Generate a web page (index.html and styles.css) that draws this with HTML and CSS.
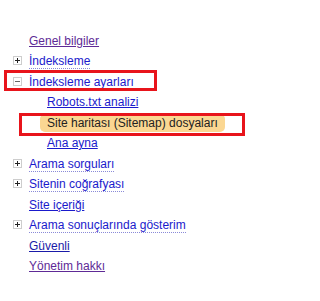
FILE: index.html
```html
<!DOCTYPE html>
<html>
<head>
<meta charset="utf-8">
<link rel="stylesheet" href="styles.css">
</head>
<body>
<ul class="tree">
  <li class="row"><span class="gap"></span><a class="lnk visited solid">Genel bilgiler</a></li>
  <li class="row"><svg class="ico" viewBox="0 0 9 9" width="9" height="9"><rect x="0.5" y="0.5" width="8" height="8" fill="none" stroke="#9a9a9a" stroke-dasharray="1 1"/><path d="M2 4.5h5M4.5 2v5" stroke="#222" stroke-width="1"/></svg><a class="lnk dotted">İndeksleme</a></li>
  <li class="row mark1"><svg class="ico" viewBox="0 0 9 9" width="9" height="9"><rect x="0.5" y="0.5" width="8" height="8" fill="none" stroke="#9a9a9a" stroke-dasharray="1 1"/><path d="M2 4.5h5" stroke="#666" stroke-width="1"/></svg><a class="lnk dotted">İndeksleme ayarları</a></li>
  <li class="row sub"><a class="lnk solid">Robots.txt analizi</a></li>
  <li class="row sub mark2"><span class="pill">Site haritası (Sitemap) dosyaları</span></li>
  <li class="row sub"><a class="lnk solid">Ana ayna</a></li>
  <li class="row"><svg class="ico" viewBox="0 0 9 9" width="9" height="9"><rect x="0.5" y="0.5" width="8" height="8" fill="none" stroke="#9a9a9a" stroke-dasharray="1 1"/><path d="M2 4.5h5M4.5 2v5" stroke="#222" stroke-width="1"/></svg><a class="lnk dotted">Arama sorguları</a></li>
  <li class="row"><svg class="ico" viewBox="0 0 9 9" width="9" height="9"><rect x="0.5" y="0.5" width="8" height="8" fill="none" stroke="#9a9a9a" stroke-dasharray="1 1"/><path d="M2 4.5h5M4.5 2v5" stroke="#222" stroke-width="1"/></svg><a class="lnk dotted">Sitenin coğrafyası</a></li>
  <li class="row"><span class="gap"></span><a class="lnk solid">Site içeriği</a></li>
  <li class="row"><svg class="ico" viewBox="0 0 9 9" width="9" height="9"><rect x="0.5" y="0.5" width="8" height="8" fill="none" stroke="#9a9a9a" stroke-dasharray="1 1"/><path d="M2 4.5h5M4.5 2v5" stroke="#222" stroke-width="1"/></svg><a class="lnk dotted">Arama sonuçlarında gösterim</a></li>
  <li class="row"><span class="gap"></span><a class="lnk solid dark">Güvenli</a></li>
  <li class="row"><span class="gap"></span><a class="lnk visited solid">Yönetim hakkı</a></li>
</ul>
</body>
</html>
```
FILE: styles.css
```css
html, body {
  margin: 0;
  padding: 0;
  background: #fff;
}
body {
  font-family: "Liberation Sans", Arial, sans-serif;
  font-size: 12px;
}
.tree {
  list-style: none;
  margin: 0;
  padding: 31px 0 0 13px;
}
.row {
  position: relative;
  display: flex;
  align-items: center;
  height: 20.5px;
  line-height: 20.5px;
}
.ico {
  flex: none;
  margin-right: 7px;
  margin-top: -2px;
}
.gap {
  flex: none;
  width: 16px;
}
.sub {
  padding-left: 34px;
}
.lnk {
  color: #1a1acc;
  cursor: pointer;
  line-height: 15px;
}
.lnk.visited {
  color: #5e2a96;
}
.lnk.dark {
  color: #1a1aa8;
}
.lnk.solid {
  text-decoration: underline;
}
.lnk.dotted {
  text-decoration: none;
  border-bottom: 1px dotted #8a8ad8;
  line-height: 14px;
}
.pill {
  background: #fbd792;
  color: #222;
  border-radius: 5px;
  line-height: 18px;
  padding: 0 7px;
  margin-left: -7px;
}
.mark1::after,
.mark2::after {
  content: "";
  position: absolute;
  box-sizing: border-box;
  border: 3px solid #e8141b;
  pointer-events: none;
}
.mark1::after {
  left: -9px;
  top: -2px;
  width: 153px;
  height: 21px;
}
.mark2::after {
  left: 6px;
  top: 0;
  width: 226px;
  height: 23px;
}
```
